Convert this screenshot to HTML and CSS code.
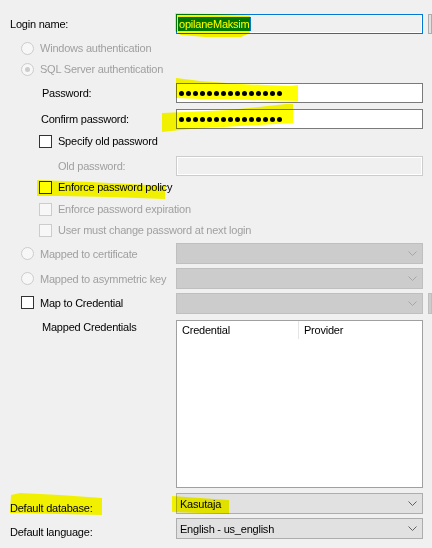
FILE: index.html
```html
<!DOCTYPE html>
<html>
<head>
<meta charset="utf-8">
<link rel="stylesheet" href="styles.css">
</head>
<body>
<div class="page">
  <div class="row">
    <span class="lbl ind10">Login name:</span>
    <div class="field focus"><span class="sel">opilaneMaksim</span></div>
    <div class="side-btn"></div>
  </div>

  <div class="row mt4">
    <div class="opt ind21 span-all dis"><span class="radio"></span><span class="lbl">Windows authentication</span></div>
  </div>
  <div class="row mt1">
    <div class="opt ind21 span-all dis"><span class="radio checked"></span><span class="lbl">SQL Server authentication</span></div>
  </div>

  <div class="row mt4">
    <span class="lbl ind42">Password:</span>
    <div class="field pw"><span class="dots"><i></i><i></i><i></i><i></i><i></i><i></i><i></i><i></i><i></i><i></i><i></i><i></i><i></i><i></i><i></i></span></div>
  </div>
  <div class="row mt6">
    <span class="lbl ind41">Confirm password:</span>
    <div class="field pw"><span class="dots"><i></i><i></i><i></i><i></i><i></i><i></i><i></i><i></i><i></i><i></i><i></i><i></i><i></i><i></i><i></i></span></div>
  </div>

  <div class="row mt2">
    <div class="opt ind39 span-all"><span class="check"></span><span class="lbl">Specify old password</span></div>
  </div>
  <div class="row mt5">
    <span class="lbl ind58 dis">Old password:</span>
    <div class="field off"></div>
  </div>

  <div class="row mt1">
    <div class="opt ind39 span-all"><span class="check"></span><span class="lbl">Enforce password policy</span></div>
  </div>
  <div class="row mt2">
    <div class="opt ind39 span-all dis"><span class="check"></span><span class="lbl">Enforce password expiration</span></div>
  </div>
  <div class="row mt1">
    <div class="opt ind39 span-all dis"><span class="check"></span><span class="lbl">User must change password at next login</span></div>
  </div>

  <div class="row tall mt3">
    <div class="opt ind21 dis"><span class="radio"></span><span class="lbl">Mapped to certificate</span></div>
    <div class="combo off"><span class="ctext"></span><svg class="chev" width="9" height="5" viewBox="0 0 9 5"><polyline points="0.5,0.5 4.5,4.5 8.5,0.5" fill="none" stroke="#a6a6a6" stroke-width="1"/></svg></div>
  </div>
  <div class="row tall mt4">
    <div class="opt ind21 dis"><span class="radio"></span><span class="lbl">Mapped to asymmetric key</span></div>
    <div class="combo off"><span class="ctext"></span><svg class="chev" width="9" height="5" viewBox="0 0 9 5"><polyline points="0.5,0.5 4.5,4.5 8.5,0.5" fill="none" stroke="#a6a6a6" stroke-width="1"/></svg></div>
  </div>
  <div class="row tall mt4">
    <div class="opt ind21 up1"><span class="check"></span><span class="lbl">Map to Credential</span></div>
    <div class="combo off"><span class="ctext"></span><svg class="chev" width="9" height="5" viewBox="0 0 9 5"><polyline points="0.5,0.5 4.5,4.5 8.5,0.5" fill="none" stroke="#a6a6a6" stroke-width="1"/></svg></div>
    <div class="side-btn off"></div>
  </div>

  <div class="row list-row mt6">
    <span class="lbl ind42 top">Mapped Credentials</span>
    <div class="list">
      <div class="lhead">
        <span class="lcol c1">Credential</span>
        <span class="lcol c2">Provider</span>
      </div>
    </div>
  </div>

  <div class="row tall mt5">
    <span class="lbl ind10 low">Default database:</span>
    <div class="combo"><span class="ctext">Kasutaja</span><svg class="chev" width="9" height="5" viewBox="0 0 9 5"><polyline points="0.5,0.5 4.5,4.5 8.5,0.5" fill="none" stroke="#606060" stroke-width="1"/></svg></div>
  </div>
  <div class="row tall mt4">
    <span class="lbl ind10 low2">Default language:</span>
    <div class="combo"><span class="ctext">English - us_english</span><svg class="chev" width="9" height="5" viewBox="0 0 9 5"><polyline points="0.5,0.5 4.5,4.5 8.5,0.5" fill="none" stroke="#606060" stroke-width="1"/></svg></div>
  </div>

  <svg class="marker" width="432" height="548" viewBox="0 0 432 548">
    <path d="M175,13 L212,14 L250,15 L250,33 L241,37 L205,37 L181,35 L175,31 Z"/>
    <path d="M176,78 L200,81 L240,84 L290,86 L298,85 L298,101 L250,100 L200,99 L176,98 Z"/>
    <path d="M162,113 L230,110 L286,104 L293,104 L293,123 L240,126 L190,129 L162,132 Z"/>
    <path d="M37,180 L90,182 L130,184 L165,186 L165,199 L110,197 L60,196 L37,196 Z"/>
    <path d="M11,495 L20,493 L60,495 L102,498 L102,515 L60,514 L10,513 Z"/>
    <path d="M172,496 L200,498 L229,500 L229,514 L200,513 L172,512 Z"/>
  </svg>
</div>
</body>
</html>
```

FILE: styles.css
```css
html, body {
  margin: 0;
  background: #f0f0f0;
}
body {
  font-family: "Liberation Sans", Arial, sans-serif;
  font-size: 11px;
  letter-spacing: -0.22px;
  color: #000;
}
.page {
  position: relative;
  width: 432px;
  height: 548px;
  overflow: hidden;
  padding-top: 14px;
  box-sizing: border-box;
}
.row {
  display: grid;
  grid-template-columns: 176px 247px 1fr;
  height: 20px;
  align-items: center;
}
.row.tall { height: 21px; }
.mt1 { margin-top: 1px; }
.mt2 { margin-top: 2px; }
.mt3 { margin-top: 3px; }
.mt4 { margin-top: 4px; }
.mt5 { margin-top: 5px; }
.mt6 { margin-top: 6px; }

.lbl {
  line-height: 14px;
  white-space: nowrap;
}
.ind10 { padding-left: 10px; }
.ind21 { padding-left: 21px; }
.ind39 { padding-left: 39px; }
.ind41 { padding-left: 41px; }
.ind42 { padding-left: 42px; }
.ind58 { padding-left: 58px; }
.span-all { grid-column: 1 / -1; }
.dis, .dis .lbl { color: #a0a0a0; }
.low { position: relative; top: 4px; }
.low2 { position: relative; top: 3px; }
.up1 { position: relative; top: -1px; }
.top { align-self: start; }

.opt {
  display: flex;
  align-items: center;
  gap: 6px;
}
.radio {
  width: 11px;
  height: 11px;
  border: 1px solid #333;
  border-radius: 50%;
  background: #fff;
  display: flex;
  align-items: center;
  justify-content: center;
  flex: none;
}
.dis .radio {
  border-color: #cccccc;
  background: #f7f7f7;
}
.radio.checked::after {
  content: "";
  width: 5px;
  height: 5px;
  border-radius: 50%;
  background: #333;
}
.dis .radio.checked::after { background: #cccccc; }
.check {
  width: 11px;
  height: 11px;
  border: 1px solid #333;
  background: #fff;
  flex: none;
}
.dis .check {
  border-color: #cccccc;
  background: #f7f7f7;
}

.field {
  height: 20px;
  box-sizing: border-box;
  border: 1px solid #7a7a7a;
  background: #fff;
  display: flex;
  align-items: center;
}
.field.focus {
  border-color: #0078d7;
  box-shadow: inset 0 0 0 1px #fff;
  background: #f0f0f0;
  padding-left: 1px;
}
.field.off {
  border-color: #cccccc;
  box-shadow: inset 0 0 0 1px #fff;
  background: #f0f0f0;
}
.sel {
  background: #0078d7;
  color: #fff;
  line-height: 14px;
  padding: 0 1px;
}
.field.pw { padding-left: 2px; }
.dots {
  display: flex;
  gap: 2px;
}
.dots i {
  width: 5px;
  height: 5px;
  border-radius: 50%;
  background: #000;
}

.side-btn {
  height: 20px;
  margin-left: 5px;
  box-sizing: border-box;
  border: 1px solid #adadad;
  background: #e1e1e1;
}
.side-btn.off {
  height: 21px;
  border-color: #bfbfbf;
  background: #cccccc;
}

.combo {
  height: 21px;
  box-sizing: border-box;
  border: 1px solid #adadad;
  background: #e1e1e1;
  display: flex;
  align-items: center;
  padding: 0 5px 0 3px;
}
.combo.off {
  border-color: #bfbfbf;
  background: #cccccc;
}
.ctext {
  flex: 1;
  line-height: 14px;
  white-space: nowrap;
}
.chev { flex: none; display: block; }

.list-row {
  height: 168px;
  align-items: stretch;
}
.list {
  box-sizing: border-box;
  border: 1px solid #a0a0a0;
  background: #fff;
}
.lhead {
  display: flex;
  height: 18px;
  align-items: center;
}
.lcol {
  line-height: 14px;
  padding-left: 5px;
  box-sizing: border-box;
}
.c1 {
  width: 122px;
  border-right: 1px solid #e5e5e5;
  height: 18px;
  display: flex;
  align-items: center;
}
.c2 { padding-left: 5px; }

.marker {
  position: absolute;
  left: 0;
  top: 0;
  mix-blend-mode: multiply;
  pointer-events: none;
}
.marker path { fill: #ffff00; }
```
